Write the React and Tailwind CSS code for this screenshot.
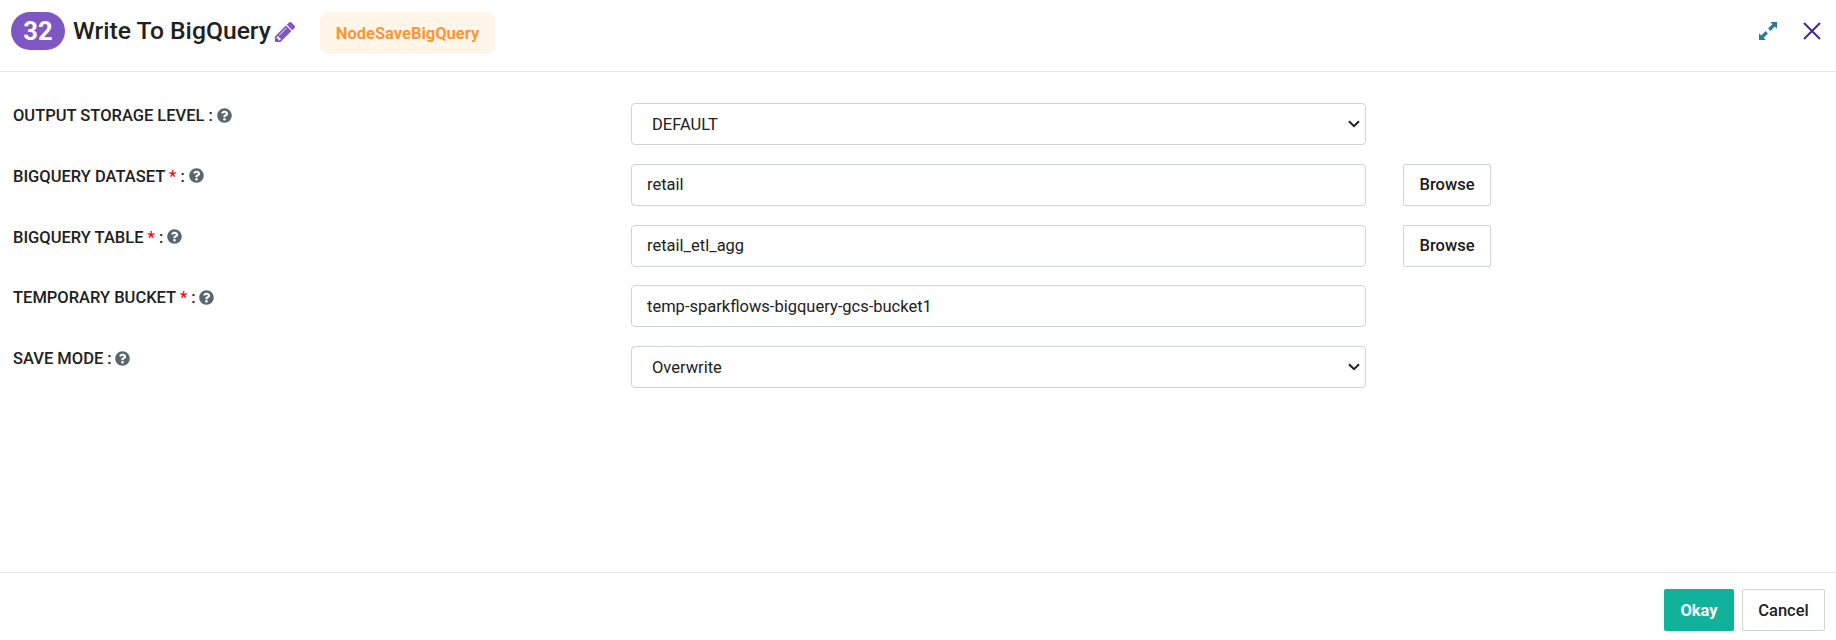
import { FaQuestionCircle } from 'react-icons/fa';

const fields = [
  { label: 'OUTPUT STORAGE LEVEL', value: 'DEFAULT', select: true },
  { label: 'BIGQUERY DATASET', value: 'retail', required: true, browse: true },
  { label: 'BIGQUERY TABLE', value: 'retail_etl_agg', required: true, browse: true },
  { label: 'TEMPORARY BUCKET', value: 'temp-sparkflows-bigquery-gcs-bucket1', required: true },
  { label: 'SAVE MODE', value: 'Overwrite', select: true },
];

function Pencil({ className }) {
  return (
    <svg className={className} viewBox="128 149 1515 1515" fill="currentColor">
      <path d="M491 1536l91-91-235-235-91 91v107h128v128h107zM1014 608q0-22-22-22-10 0-17 7l-542 542q-7 7-7 17 0 22 22 22 10 0 17-7l542-542q7-7 7-17zM960 416l416 416-832 832h-416v-416zM1643 512q0 53-37 90l-166 166-416-416 166-165q36-38 90-38 53 0 91 38l235 234q37 39 37 91z" />
    </svg>
  );
}

function Field({ label, value, select, required, browse }) {
  return (
    <div className="flex h-[60.75px] items-start">
      <div className="flex w-[618px] shrink-0 items-center text-[16.5px] leading-[25px] font-medium">
        <span>
          {label}
          {required && <span className="text-[#ff0000]"> *</span>} :
        </span>
        <FaQuestionCircle className="mb-px ml-[3.8px] size-[15px] text-[#5a6570]" />
      </div>
      <div
        className={
          'flex h-[42px] w-[735px] shrink-0 items-center justify-between rounded border border-[#ced4da] text-[16.5px] ' +
          (select ? 'pl-5 pr-[5px]' : 'px-[15px]')
        }
      >
        <span className="pt-[2px]">{value}</span>
        {select && (
          <svg className="h-[8px] w-[12px]" viewBox="0 0 12 8" fill="none" stroke="#212121" strokeWidth="2">
            <path d="M1 1.2 L6 6.2 L11 1.2" />
          </svg>
        )}
      </div>
      {browse && (
        <button className="ml-[37px] h-[42px] w-[88px] rounded-[2px] border border-[#ced4da] pt-[2px] text-[16.5px] font-medium text-[#1a1a1a]">
          Browse
        </button>
      )}
    </div>
  );
}

export default function App() {
  return (
    <div className="flex h-[640px] w-[1836px] flex-col bg-white font-['Roboto',sans-serif] text-[#212121]">
      <header className="flex h-[72px] shrink-0 items-start border-b border-[#e6e7e9] pt-3 pr-[15px] pl-[11px]">
        <span className="flex h-[38px] w-[54px] items-center justify-center rounded-full bg-[#7e57c2] pt-px text-[25.5px] font-bold text-white">
          32
        </span>
        <h1 className="ml-[8px] flex h-[37px] w-[198px] items-center text-[24.7px] font-medium whitespace-nowrap">
          Write To BigQuery
        </h1>
        <Pencil className="mt-[10px] ml-[4px] size-5 text-[#7e57c2]" />
        <span className="ml-[25px] flex h-[42px] w-[175px] items-center justify-center rounded-lg bg-[#fff5e9] pt-[2px] text-[16.5px] font-bold text-[#ff9434]">
          NodeSaveBigQuery
        </span>
        <div className="mt-[10px] ml-auto flex gap-[26px]">
          <svg className="size-[18px]" viewBox="0 0 18 18" fill="#2b7a9b">
            <path d="M11.3 0H18V6.7L15.7 4.6L11.4 8.9L9.1 6.6L13.4 2.3Z" />
            <path d="M6.7 18H0V11.3L2.3 13.4L6.6 9.1L8.9 11.4L4.6 15.7Z" />
          </svg>
          <svg className="size-[18px]" viewBox="0 0 18 18" stroke="#3d2b8f" strokeWidth="2">
            <path d="M1 1L17 17M17 1L1 17" />
          </svg>
        </div>
      </header>
      <main className="flex-1 pt-[31px] pl-[13px]">
        {fields.map((f) => (
          <Field key={f.label} {...f} />
        ))}
      </main>
      <footer className="flex h-[68px] shrink-0 justify-end gap-2 border-t border-[#e6e7e9] pt-4 pr-[11px]">
        <button className="h-[42px] w-[70px] rounded-[2px] bg-[#11b29b] pt-[2px] text-[16.5px] font-bold text-white">Okay</button>
        <button className="h-[42px] w-[83px] rounded-[2px] border border-[#ced4da] pt-[2px] text-[16.5px] font-medium">Cancel</button>
      </footer>
    </div>
  );
}
